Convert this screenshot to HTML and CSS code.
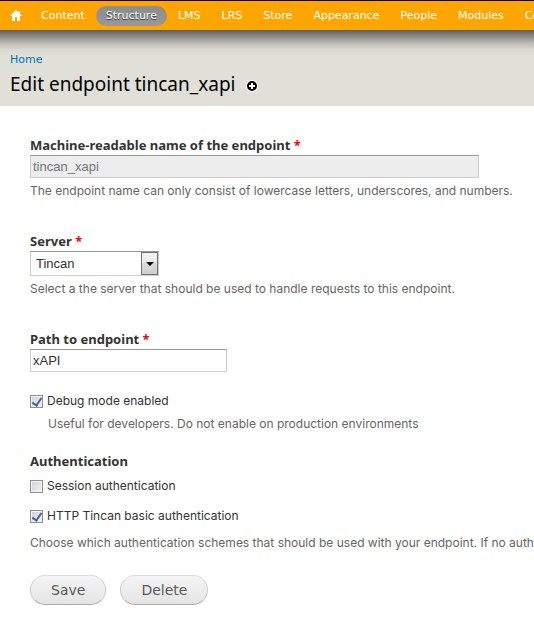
FILE: index.html
```html
<!DOCTYPE html>
<html lang="en">
<head>
    <meta charset="UTF-8">
    <meta name="viewport" content="width=device-width, initial-scale=1.0">
    <title>Edit endpoint tincan_xapi</title>
    <link rel="stylesheet" href="styles.css">
</head>
<body>
    <nav class="toolbar">
        <a class="home" href="#" aria-label="Home">
            <svg width="12" height="12" viewBox="0 0 12 12"><path d="M6 0L0 6h2v5h3V7h2v4h3V6h2L10 4V1H8.500v1.500z" fill="#fff"/></svg>
        </a>
        <a href="#">Content</a>
        <a class="active" href="#">Structure</a>
        <a href="#">LMS</a>
        <a href="#">LRS</a>
        <a href="#">Store</a>
        <a href="#">Appearance</a>
        <a href="#">People</a>
        <a href="#">Modules</a>
        <a href="#">Configuration</a>
    </nav>

    <header class="branding">
        <a class="breadcrumb" href="#">Home</a>
        <div class="title-row">
            <h1>Edit endpoint tincan_xapi</h1>
            <a class="shortcut" href="#" aria-label="Add to shortcuts">
                <svg width="12" height="12" viewBox="0 0 12 12"><circle cx="6" cy="6" r="6" fill="#fff"/><circle cx="6" cy="6" r="5" fill="#000"/><path d="M5 3h2v2h2v2H7v2H5V7H3V5h2z" fill="#fff"/></svg>
            </a>
        </div>
    </header>

    <form class="content">
        <div class="form-item">
            <label class="title" for="name">Machine-readable name of the endpoint <span class="required">*</span></label>
            <input class="text wide" id="name" type="text" value="tincan_xapi" disabled>
            <p class="description">The endpoint name can only consist of lowercase letters, underscores, and numbers.</p>
        </div>

        <div class="form-item">
            <label class="title" for="server">Server <span class="required">*</span></label>
            <div class="select-wrap">
                <select id="server"><option>Tincan</option></select>
                <span class="arrow"></span>
            </div>
            <p class="description">Select a the server that should be used to handle requests to this endpoint.</p>
        </div>

        <div class="form-item path">
            <label class="title" for="path">Path to endpoint <span class="required">*</span></label>
            <input class="text" id="path" type="text" value="xAPI">
        </div>

        <div class="form-item debug">
            <div class="check">
                <input id="debug" type="checkbox" checked>
                <label for="debug">Debug mode enabled</label>
            </div>
            <p class="description">Useful for developers. Do not enable on production environments</p>
        </div>

        <fieldset class="auth">
            <legend class="title">Authentication</legend>
            <div class="check">
                <input id="session" type="checkbox">
                <label for="session">Session authentication</label>
            </div>
            <div class="check">
                <input id="http" type="checkbox" checked>
                <label for="http">HTTP Tincan basic authentication</label>
            </div>
            <p class="description">Choose which authentication schemes that should be used with your endpoint. If no authentication</p>
        </fieldset>

        <div class="actions">
            <button type="submit">Save</button>
            <button type="button">Delete</button>
        </div>
    </form>
</body>
</html>
```
FILE: styles.css
```css
* {
    box-sizing: border-box;
}
body {
    margin: 0;
    background: #fff;
    color: #333;
    font-family: Inter, sans-serif;
    font-size: 12px;
    line-height: 18px;
}

/* Toolbar */
.toolbar {
    display: flex;
    align-items: center;
    gap: 1px;
    height: 30px;
    padding-left: 5px;
    border-top: 1px solid #000;
    background: #ffa500;
    overflow: hidden;
}
.toolbar a {
    flex: none;
    padding: 0 10px;
    border-radius: 10px;
    color: #fff;
    font-family: "DejaVu Sans", sans-serif;
    font-size: 11px;
    line-height: 20px;
    text-decoration: none;
}
.toolbar .home {
    display: flex;
    align-items: center;
    height: 20px;
    padding: 0 8px 0 5px;
}
.toolbar .active {
    background: linear-gradient(#8c8c8c, #999);
    text-shadow: 0 1px 1px #333;
}

/* Page header */
.branding {
    padding: 21px 10px 7px;
    background: linear-gradient(#5d5d59, #8a8a85 6px, #c0c0b9 14px, #dadad2 20px, #e0e0d8 27px);
}
.breadcrumb {
    display: block;
    color: #0074bd;
    font-family: "DejaVu Sans", sans-serif;
    font-size: 11px;
    text-decoration: none;
}
.title-row {
    display: flex;
    align-items: center;
    gap: 11px;
}
h1 {
    margin: 0;
    color: #000;
    font-family: "Noto Sans", sans-serif;
    font-size: 19px;
    font-weight: normal;
    line-height: 30px;
}
.shortcut {
    height: 12px;
    margin-top: 4px;
}
.shortcut svg {
    display: block;
}

/* Form */
.content {
    padding: 29px 0 17px 30px;
}
.form-item {
    margin-bottom: 31px;
}
.form-item.path {
    margin-bottom: 20px;
}
.form-item.debug {
    margin-bottom: 18px;
}
.title {
    display: block;
    padding: 0;
    font-family: "Noto Sans", sans-serif;
    font-weight: bold;
    font-size: 13px;
    line-height: 20px;
}
.required {
    color: #f00;
}
.text,
select {
    display: block;
    border: 1px solid #ccc;
    border-top-color: #999;
    border-radius: 0;
    background: #fff;
    color: #333;
    font-family: "Liberation Sans", Arial, sans-serif;
    font-size: 13px;
}
.text {
    width: 197px;
    height: 23px;
    padding: 2px;
}
.wide {
    width: 449px;
    max-width: 100%;
}
.text:disabled {
    background: #ededed;
    color: #777;
}
.select-wrap {
    position: relative;
    width: 129px;
}
select {
    appearance: none;
    width: 100%;
    height: 25px;
    padding: 0 24px 0 5px;
}
.arrow {
    position: absolute;
    top: 1px;
    right: 1px;
    width: 17px;
    height: 23px;
    border: 1px solid #707070;
    background: linear-gradient(#f2f2f2, #ebebeb 50%, #dcdcdc 50%, #cfcfcf);
    pointer-events: none;
}
.arrow::after {
    content: "";
    position: absolute;
    top: 9px;
    left: 4px;
    border: 4px solid transparent;
    border-top-color: #000;
    border-bottom: 0;
}
.description {
    margin: 4px 0 0;
    color: #666;
    white-space: nowrap;
    overflow: hidden;
}
.debug .description {
    margin: 5px 0 0 18px;
}
.check {
    display: flex;
    align-items: center;
    gap: 4px;
}
.check input {
    appearance: none;
    display: grid;
    place-items: center;
    width: 13px;
    height: 13px;
    margin: 0;
    border: 1px solid #8e8f8f;
    background: linear-gradient(135deg, #cbcfd5, #f6f6f6);
    box-shadow: inset 0 0 0 1px #f4f4f4;
}
.check input:checked::after {
    content: "";
    width: 4px;
    height: 8px;
    margin-bottom: 2px;
    border: solid #4b5f97;
    border-width: 0 2px 2px 0;
    transform: rotate(35deg);
}
.auth {
    margin: 0 0 23px;
    padding: 0;
    border: 0;
    min-width: 0;
}
.auth .check {
    margin-top: 6px;
}
.auth .check + .check {
    margin-top: 12px;
}
.auth .description {
    margin-top: 9px;
}

/* Buttons */
.actions {
    display: flex;
    gap: 14px;
}
button {
    height: 30px;
    padding: 0 20px;
    border: 1px solid #ccc;
    border-color: #ddd #ccc #aaa;
    border-radius: 15px;
    background: linear-gradient(#f5f5f5, #e4e4e4);
    color: #5a5a5a;
    font-family: "DejaVu Sans", sans-serif;
    font-size: 14px;
}
```
